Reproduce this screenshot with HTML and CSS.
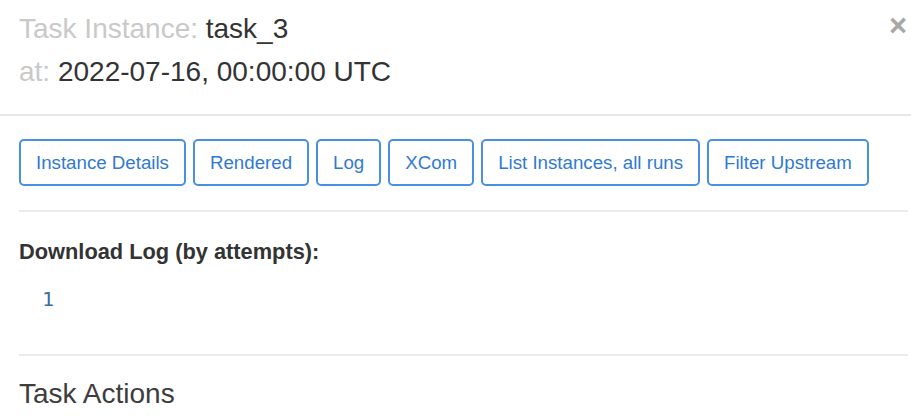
FILE: index.html
```html
<!DOCTYPE html>
<html lang="en">
<head>
   <meta charset="UTF-8">
   <meta name="viewport" content="width=device-width, initial-scale=1.0">
   <title>Task Instance - task_3</title>
   <link rel="stylesheet" href="styles.css">
</head>
<body>
   <div class="modal">
      <div class="modal-header">
         <h4 class="modal-title">
            <span class="muted">Task Instance:</span> task_3<br>
            <span class="muted">at:</span> 2022-07-16, 00:00:00 UTC
         </h4>
         <button class="close" type="button">&times;</button>
      </div>
      <div class="modal-body">
         <div class="btn-row">
            <a class="btn" href="#">Instance Details</a>
            <a class="btn" href="#">Rendered</a>
            <a class="btn" href="#">Log</a>
            <a class="btn" href="#">XCom</a>
            <a class="btn" href="#">List Instances, all runs</a>
            <a class="btn" href="#">Filter Upstream</a>
         </div>
         <hr>
         <div class="log-block">
            <label>Download Log (by attempts):</label>
            <div class="attempts">
               <a class="attempt" href="#">1</a>
            </div>
         </div>
         <hr class="hr-actions">
         <h4 class="section-title">Task Actions</h4>
      </div>
   </div>
</body>
</html>
```

FILE: styles.css
```css
* { box-sizing: border-box; }
body {
   margin: 0;
   padding: 0;
   font-family: "Liberation Sans", Arial, Helvetica, sans-serif;
   background: #fff;
   color: #333;
   overflow: hidden;
}
.modal {
   width: 911px;
   background: #fff;
}
.modal-header {
   display: flex;
   justify-content: space-between;
   align-items: flex-start;
   padding: 7px 4px 21px 19px;
   border-bottom: 2px solid #e7e7e7;
}
.modal-title {
   margin: 0;
   font-size: 28px;
   font-weight: normal;
   line-height: 43px;
   color: #333;
}
.muted { color: #c9c9c9; }
.close {
   padding: 0;
   margin: 3px 0 0 0;
   border: none;
   background: none;
   font-family: "Liberation Sans", Arial, sans-serif;
   font-size: 31px;
   font-weight: bold;
   line-height: 1;
   color: #a8a8a8;
   cursor: pointer;
}
.modal-body {
   padding: 23px 3px 0 19px;
}
.btn-row {
   display: flex;
   gap: 7px;
}
.btn {
   display: inline-block;
   padding: 7.5px 15px;
   font-size: 18.7px;
   line-height: 28px;
   color: #3079d6;
   text-decoration: none;
   border: 2px solid #4a8fe2;
   border-radius: 5px;
   background: #fff;
}
hr {
   margin: 24px 0 0 0;
   border: none;
   border-top: 2px solid #ebebeb;
}
.log-block { margin-top: 24px; }
.log-block label {
   display: block;
   font-size: 21.8px;
   font-weight: bold;
   line-height: 31px;
   color: #333;
}
.attempts {
   margin-top: 20px;
   padding-left: 23px;
   line-height: 24px;
}
.attempt {
   font-family: "DejaVu Sans Mono", monospace;
   font-size: 20px;
   color: #3b6d9f;
   text-decoration: none;
}
.hr-actions { margin-top: 41px; }
.section-title {
   margin: 18px 0 0 0;
   font-size: 28px;
   font-weight: normal;
   line-height: 40px;
   color: #3d3d3d;
}
```
